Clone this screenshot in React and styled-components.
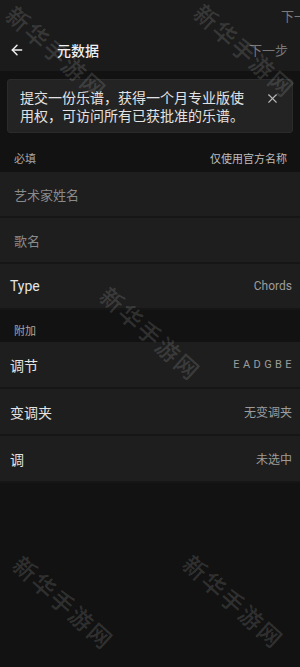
import React from "react";
import styled, { createGlobalStyle } from "styled-components";
import { ArrowLeft, X } from "lucide-react";

const Global = createGlobalStyle`
  html, body { margin: 0; padding: 0; background: #121212; }
  body { font-family: "Roboto", "Noto Sans CJK SC", sans-serif; }
  * { box-sizing: border-box; }
`;

const Page = styled.div`
  position: relative;
  width: 300px;
  min-height: 667px;
  background: #121212;
  overflow: hidden;
`;

const Header = styled.header`
  background: #1b1b1b;
  height: 71px;
  display: flex;
  flex-direction: column;
`;

const TopStrip = styled.div`
  height: 28px;
  display: flex;
  justify-content: flex-end;
  align-items: center;
  overflow: hidden;
  padding-top: 2px;
`;

const GhostNext = styled.span`
  color: #7a7a7a;
  font-size: 13px;
  white-space: nowrap;
  margin-right: -20px;
`;

const NavBar = styled.div`
  flex: 1;
  display: flex;
  align-items: center;
  padding: 0 12px 0 9px;
`;

const BackButton = styled.button`
  background: none;
  border: 0;
  padding: 0;
  width: 16px;
  height: 16px;
  display: flex;
  align-items: center;
  justify-content: center;
  color: #f0f0f0;
`;

const Title = styled.h1`
  margin: 0 0 0 32px;
  font-size: 14px;
  font-weight: 500;
  color: #f0f0f0;
  flex: 1;
  font-family: "Noto Sans CJK SC", sans-serif;
`;

const NextLink = styled.span`
  color: #777;
  font-size: 13px;
  font-family: "Noto Sans CJK SC", sans-serif;
`;

const Banner = styled.div`
  margin: 8px 7px 0;
  min-height: 54px;
  background: #232323;
  border: 1px solid #2b2b2b;
  border-radius: 3px;
  display: flex;
  align-items: flex-start;
  justify-content: space-between;
  padding: 8px 12px 7px 12px;
`;

const BannerText = styled.p`
  margin: 0;
  width: 230px;
  font-size: 14px;
  line-height: 18px;
  color: #e2e2e2;
  font-family: "Noto Sans CJK SC", sans-serif;
`;

const CloseButton = styled.button`
  background: none;
  border: 0;
  padding: 0;
  margin-top: 3px;
  color: #b8b8b8;
  display: flex;
`;

const SectionHeader = styled.div`
  height: ${(p) => p.$h}px;
  display: flex;
  align-items: flex-end;
  justify-content: space-between;
  padding: 0 13px ${(p) => p.$pb}px 14px;
  font-size: 11px;
  color: #a8a8a8;
  font-family: "Noto Sans CJK SC", sans-serif;
`;

const SectionTitle = styled.span`
  color: #a8a8a8;
`;

const SectionHint = styled.span`
  color: #bdbdbd;
`;

const Rows = styled.div`
  display: flex;
  flex-direction: column;
`;

const Row = styled.div`
  height: ${(p) => p.$h || 46}px;
  background: #1e1e1e;
  border-bottom: 2px solid #161616;
  display: flex;
  align-items: center;
  justify-content: space-between;
  padding: 0 8px 0 ${(p) => (p.$placeholder ? 14 : 10)}px;
`;

const RowLabel = styled.span`
  font-size: ${(p) => (p.$placeholder ? 13 : 14)}px;
  color: ${(p) => (p.$placeholder ? "#8a8a8a" : "#e4e4e4")};
  font-family: "Roboto", "Noto Sans CJK SC", sans-serif;
`;

const RowValue = styled.span`
  font-size: ${(p) => (p.$spaced ? 11 : 12)}px;
  letter-spacing: ${(p) => (p.$spaced ? "3.4px" : "0")};
  margin-right: ${(p) => (p.$spaced ? "-3px" : "0")};
  color: #9c9c9c;
  font-family: "Roboto", "Noto Sans CJK SC", sans-serif;
`;

const Watermark = styled.span`
  position: absolute;
  left: ${(p) => p.$x}px;
  top: ${(p) => p.$y}px;
  transform: translate(-50%, -50%) rotate(42deg);
  font-family: "Noto Sans CJK SC", sans-serif;
  font-weight: 500;
  font-size: 23px;
  letter-spacing: 2px;
  white-space: nowrap;
  color: rgba(255, 255, 255, 0.14);
  pointer-events: none;
  z-index: 5;
`;

const marks = [
  [57, 52],
  [245, 50],
  [151, 333],
  [64, 602],
  [234, 601],
];

export default function App() {
  return (
    <>
      <Global />
      <Page>
        <Header>
          <TopStrip>
            <GhostNext>下一步</GhostNext>
          </TopStrip>
          <NavBar>
            <BackButton aria-label="返回">
              <ArrowLeft size={16} strokeWidth={2.2} />
            </BackButton>
            <Title>元数据</Title>
            <NextLink>下一步</NextLink>
          </NavBar>
        </Header>

        <Banner>
          <BannerText>
            提交一份乐谱，获得一个月专业版使用权，可访问所有已获批准的乐谱。
          </BannerText>
          <CloseButton aria-label="关闭">
            <X size={15} strokeWidth={1.8} />
          </CloseButton>
        </Banner>

        <SectionHeader $h={39} $pb={6}>
          <SectionTitle>必填</SectionTitle>
          <SectionHint>仅使用官方名称</SectionHint>
        </SectionHeader>
        <Rows>
          <Row $placeholder>
            <RowLabel $placeholder>艺术家姓名</RowLabel>
          </Row>
          <Row $placeholder>
            <RowLabel $placeholder>歌名</RowLabel>
          </Row>
          <Row>
            <RowLabel>Type</RowLabel>
            <RowValue>Chords</RowValue>
          </Row>
        </Rows>

        <SectionHeader $h={32} $pb={4}>
          <SectionTitle>附加</SectionTitle>
        </SectionHeader>
        <Rows>
          <Row $h={47}>
            <RowLabel>调节</RowLabel>
            <RowValue $spaced>EADGBE</RowValue>
          </Row>
          <Row $h={47}>
            <RowLabel>变调夹</RowLabel>
            <RowValue>无变调夹</RowValue>
          </Row>
          <Row $h={47}>
            <RowLabel>调</RowLabel>
            <RowValue>未选中</RowValue>
          </Row>
        </Rows>

        {marks.map(([x, y], i) => (
          <Watermark key={i} $x={x} $y={y}>
            新华手游网
          </Watermark>
        ))}
      </Page>
    </>
  );
}
